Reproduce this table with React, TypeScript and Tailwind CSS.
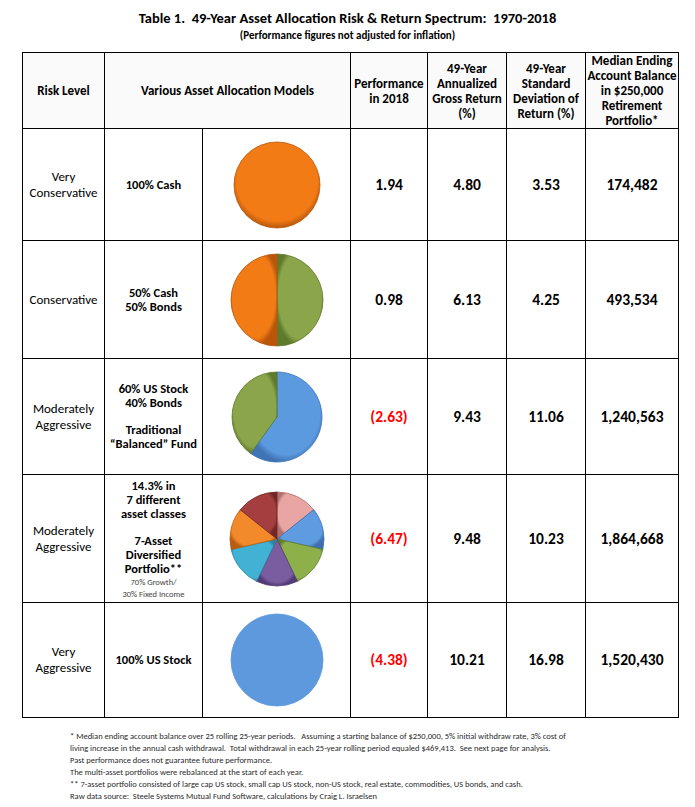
import React from "react";

type Slice = { value: number; color: string; dark: string };

const Pie = ({ slices, r = 45 }: { slices: Slice[]; r?: number }) => {
  const size = 100;
  const c = size / 2;
  const total = slices.reduce((s, x) => s + x.value, 0);
  const pt = (a: number) => [c + r * Math.sin(a), c - r * Math.cos(a)];
  let start = 0;
  return (
    <svg width={size} height={size} viewBox={`0 0 ${size} ${size}`}>
      <defs>
        {slices.map((s, i) => (
          <radialGradient key={i} id={`g-${s.color.slice(1)}`} cx="50%" cy="45%" r="55%">
            <stop offset="0%" stopColor={s.color} />
            <stop offset="85%" stopColor={s.color} />
            <stop offset="100%" stopColor={s.dark} />
          </radialGradient>
        ))}
      </defs>
      {slices.map((s, i) => {
        const ang = (s.value / total) * Math.PI * 2;
        const end = start + ang;
        const [x1, y1] = pt(start);
        const [x2, y2] = pt(end);
        const large = ang > Math.PI ? 1 : 0;
        start = end;
        if (slices.length === 1) {
          return <circle key={i} cx={c} cy={c} r={r} fill={`url(#g-${s.color.slice(1)})`} stroke={s.dark} strokeWidth={0.8} />;
        }
        return (
          <path
            key={i}
            d={`M${c},${c} L${x1},${y1} A${r},${r} 0 ${large} 1 ${x2},${y2} Z`}
            fill={`url(#g-${s.color.slice(1)})`}
            stroke={s.dark}
            strokeWidth={0.8}
            strokeLinejoin="round"
          />
        );
      })}
    </svg>
  );
};

const orange = { color: "#f27b16", dark: "#b9560a" };
const green = { color: "#8ba64a", dark: "#5e7a2c" };
const blue = { color: "#5c9ae0", dark: "#3f73b3" };

const rows = [
  {
    h: "h-[112px]",
    risk: ["Very", "Conservative"],
    model: <p>100% Cash</p>,
    pie: [{ value: 1, ...orange }],
    r: 43,
    perf: "1.94",
    neg: false,
    ann: "4.80",
    std: "3.53",
    bal: "174,482",
  },
  {
    h: "h-[118px]",
    risk: ["Conservative"],
    model: (
      <p>
        50% Cash
        <br />
        50% Bonds
      </p>
    ),
    pie: [{ value: 50, ...green }, { value: 50, ...orange }],
    r: 46,
    perf: "0.98",
    neg: false,
    ann: "6.13",
    std: "4.25",
    bal: "493,534",
  },
  {
    h: "h-[116px]",
    risk: ["Moderately", "Aggressive"],
    model: (
      <div className="flex flex-col gap-[13px]">
        <p>
          60% US Stock
          <br />
          40% Bonds
        </p>
        <p>
          Traditional
          <br />
          “Balanced” Fund
        </p>
      </div>
    ),
    pie: [{ value: 60, ...blue }, { value: 40, ...green }],
    r: 45,
    perf: "(2.63)",
    neg: true,
    ann: "9.43",
    std: "11.06",
    bal: "1,240,563",
  },
  {
    h: "h-[128px]",
    risk: ["Moderately", "Aggressive"],
    model: (
      <div className="flex flex-col gap-[13px] pt-[2px]">
        <p>
          14.3% in
          <br />
          7 different
          <br />
          asset classes
        </p>
        <div>
          <p>
            7-Asset
            <br />
            Diversified
            <br />
            Portfolio**
          </p>
          <p className="text-[8.5px] leading-[12px] font-normal text-[#444]">
            70% Growth/
            <br />
            30% Fixed Income
          </p>
        </div>
      </div>
    ),
    pie: [
      { value: 1, color: "#e8a5a3", dark: "#b06e6c" },
      { value: 1, color: "#5f9be0", dark: "#3d70b0" },
      { value: 1, color: "#8eb04a", dark: "#5f7d2a" },
      { value: 1, color: "#7a5ca0", dark: "#523b74" },
      { value: 1, color: "#41b2d3", dark: "#2a82a0" },
      { value: 1, color: "#f28a2b", dark: "#b85c10" },
      { value: 1, color: "#a53e3e", dark: "#722626" },
    ],
    r: 47,
    perf: "(6.47)",
    neg: true,
    ann: "9.48",
    std: "10.23",
    bal: "1,864,668",
  },
  {
    h: "h-[115px]",
    risk: ["Very", "Aggressive"],
    model: <p>100% US Stock</p>,
    pie: [{ value: 1, color: "#5d99dc", dark: "#5d99dc" }],
    r: 46,
    perf: "(4.38)",
    neg: true,
    ann: "10.21",
    std: "16.98",
    bal: "1,520,430",
  },
];

const cell = "border border-black text-center align-middle";

export default function App() {
  return (
    <div className="w-[695px] h-[807px] bg-white text-black font-[Carlito,Lato,'Liberation_Sans',sans-serif]">
      <div className="pt-[9px] text-center font-bold">
        <h1 className="text-[14.5px] leading-[18px]">
          Table 1.&nbsp; 49-Year Asset Allocation Risk &amp; Return Spectrum:&nbsp; 1970-2018
        </h1>
        <p className="text-[11px] leading-[14px] mt-[2px]">(Performance figures not adjusted for inflation)</p>
      </div>

      <table className="ml-[22px] mt-[9px] border-collapse table-fixed w-[656px]">
        <colgroup>
          <col className="w-[82px]" />
          <col className="w-[98px]" />
          <col className="w-[148px]" />
          <col className="w-[77px]" />
          <col className="w-[79px]" />
          <col className="w-[79px]" />
          <col className="w-[93px]" />
        </colgroup>
        <thead>
          <tr className="h-[74px] bg-[#fafafa] text-[13px] leading-[15px] font-bold">
            <th className={cell}>Risk Level</th>
            <th className={cell} colSpan={2}>
              Various Asset Allocation Models
            </th>
            <th className={cell}>
              Performance
              <br />
              in 2018
            </th>
            <th className={cell}>
              49-Year
              <br />
              Annualized
              <br />
              Gross Return
              <br />
              (%)
            </th>
            <th className={cell}>
              49-Year
              <br />
              Standard
              <br />
              Deviation of
              <br />
              Return (%)
            </th>
            <th className={cell}>
              Median Ending
              <br />
              Account Balance
              <br />
              in $250,000
              <br />
              Retirement
              <br />
              Portfolio*
            </th>
          </tr>
        </thead>
        <tbody>
          {rows.map((row, i) => (
            <tr key={i} className={row.h}>
              <td className={`${cell} text-[13px] leading-[16px]`}>
                {row.risk.map((l) => (
                  <div key={l}>{l}</div>
                ))}
              </td>
              <td className={`${cell} text-[12.5px] leading-[14px] font-bold`}>{row.model}</td>
              <td className={cell}>
                <div className="flex justify-center items-center">
                  <Pie slices={row.pie} r={row.r} />
                </div>
              </td>
              <td className={`${cell} text-[15.5px] font-bold ${row.neg ? "text-[#ff0000]" : ""}`}>{row.perf}</td>
              <td className={`${cell} text-[15.5px] font-bold`}>{row.ann}</td>
              <td className={`${cell} text-[15.5px] font-bold`}>{row.std}</td>
              <td className={`${cell} text-[15.5px] font-bold`}>{row.bal}</td>
            </tr>
          ))}
        </tbody>
      </table>

      <div className="ml-[70px] mt-[12px] text-[8.5px] leading-[12px] text-[#2a2a2a] whitespace-nowrap">
        <p>
          * Median ending account balance over 25 rolling 25-year periods.&nbsp;&nbsp; Assuming a starting balance of $250,000, 5% initial withdraw rate, 3% cost of
        </p>
        <p>
          living increase in the annual cash withdrawal.&nbsp; Total withdrawal in each 25-year rolling period equaled $469,413.&nbsp; See next page for analysis.
        </p>
        <p>Past performance does not guarantee future performance.</p>
        <p>The multi-asset portfolios were rebalanced at the start of each year.</p>
        <p>** 7-asset portfolio consisted of large cap US stock, small cap US stock, non-US stock, real estate, commodities, US bonds, and cash.</p>
        <p>Raw data source:&nbsp; Steele Systems Mutual Fund Software, calculations by Craig L. Israelsen</p>
      </div>
    </div>
  );
}
